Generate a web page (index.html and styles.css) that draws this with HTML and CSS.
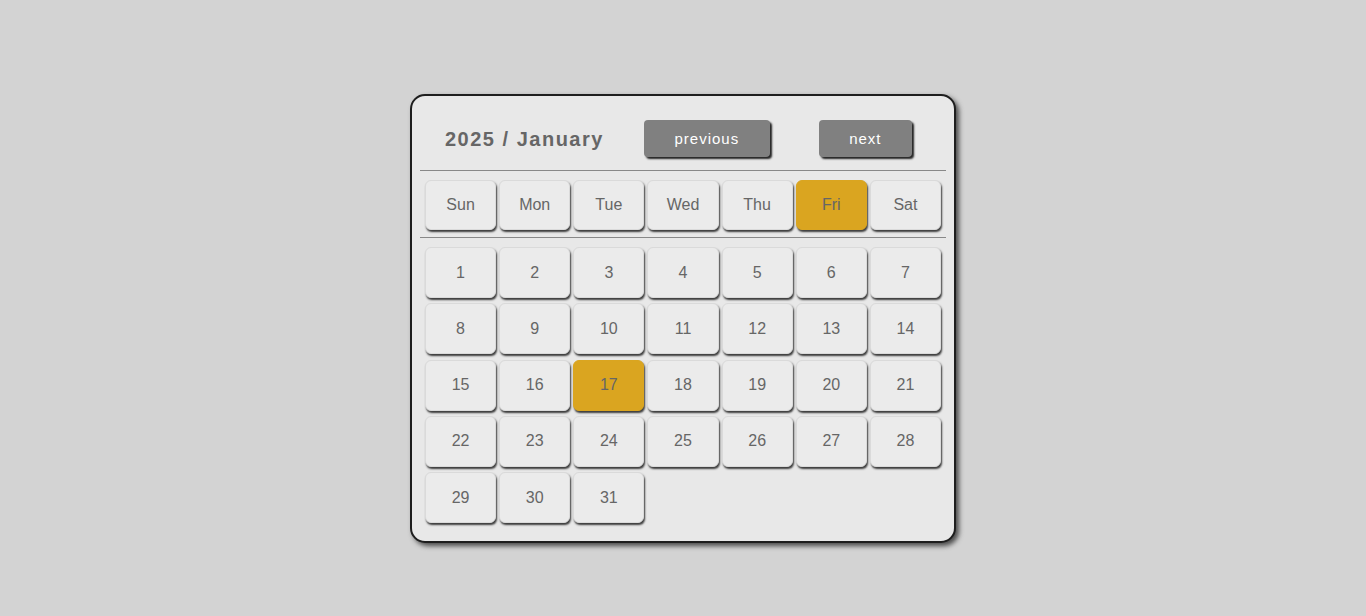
FILE: index.html
```html
<!DOCTYPE html>
<html>
<head>
<meta charset="utf-8">
<link rel="stylesheet" href="styles.css">
</head>
<body>
<div class="page">
  <div class="calendar">
    <div class="header">
      <div class="title">2025 / January</div>
      <button class="nav prev">previous</button>
      <button class="nav next">next</button>
    </div>
    <div class="rule"></div>
    <div class="weekdays">
      <div class="cell">Sun</div>
      <div class="cell">Mon</div>
      <div class="cell">Tue</div>
      <div class="cell">Wed</div>
      <div class="cell">Thu</div>
      <div class="cell active">Fri</div>
      <div class="cell">Sat</div>
    </div>
    <div class="rule rule2"></div>
    <div class="dates">
      <div class="cell">1</div><div class="cell">2</div><div class="cell">3</div><div class="cell">4</div><div class="cell">5</div><div class="cell">6</div><div class="cell">7</div>
      <div class="cell">8</div><div class="cell">9</div><div class="cell">10</div><div class="cell">11</div><div class="cell">12</div><div class="cell">13</div><div class="cell">14</div>
      <div class="cell">15</div><div class="cell">16</div><div class="cell active">17</div><div class="cell">18</div><div class="cell">19</div><div class="cell">20</div><div class="cell">21</div>
      <div class="cell">22</div><div class="cell">23</div><div class="cell">24</div><div class="cell">25</div><div class="cell">26</div><div class="cell">27</div><div class="cell">28</div>
      <div class="cell">29</div><div class="cell">30</div><div class="cell">31</div>
    </div>
  </div>
</div>
</body>
</html>
```

FILE: styles.css
```css
html, body {
  margin: 0;
  padding: 0;
  background: #d3d3d3;
  font-family: "Liberation Sans", Arial, sans-serif;
}
.page {
  height: 616px;
  display: flex;
  justify-content: center;
  align-items: flex-start;
  padding-top: 94px;
  box-sizing: border-box;
}
.calendar {
  width: 546px;
  box-sizing: border-box;
  border: 2px solid #1e1e1e;
  border-radius: 15px;
  background: #e8e8e8;
  box-shadow: 3px 3px 5px #4a4a4a;
  padding: 8px 8px 18px 8px;
}
.header {
  display: flex;
  align-items: center;
  height: 66px;
  box-sizing: border-box;
  padding: 16px 0 13px 0;
}
.title {
  margin-left: 25px;
  font-size: 20px;
  font-weight: bold;
  letter-spacing: 1.5px;
  color: #666;
  padding-top: 1px;
}
.nav {
  height: 37px;
  border: none;
  border-radius: 4px;
  background: #808080;
  color: #fff;
  font-family: "Liberation Sans", Arial, sans-serif;
  font-size: 15px;
  letter-spacing: 1px;
  box-shadow: 2px 2px 2px #222;
  padding: 0;
}
.prev {
  width: 126px;
  margin-left: 40px;
}
.next {
  width: 93px;
  margin-left: 49px;
}
.rule {
  height: 1px;
  background: #888;
}
.weekdays {
  display: grid;
  grid-template-columns: repeat(7, 1fr);
  gap: 3px;
  padding: 9px 5px 7px 5px;
}
.weekdays .cell {
  height: 50px;
}
.dates {
  display: grid;
  grid-template-columns: repeat(7, 1fr);
  column-gap: 3px;
  row-gap: 5.25px;
  padding: 9px 5px 0 5px;
}
.dates .cell {
  height: 51px;
}
.cell {
  box-sizing: border-box;
  display: flex;
  align-items: center;
  justify-content: center;
  background: #ebebeb;
  border: 1px solid #dadada;
  border-radius: 6px;
  box-shadow: 1px 2px 2px #3a3a3a;
  color: #666;
  font-size: 16px;
}
.cell.active {
  background: #daa520;
  border-color: #daa520;
}
```
